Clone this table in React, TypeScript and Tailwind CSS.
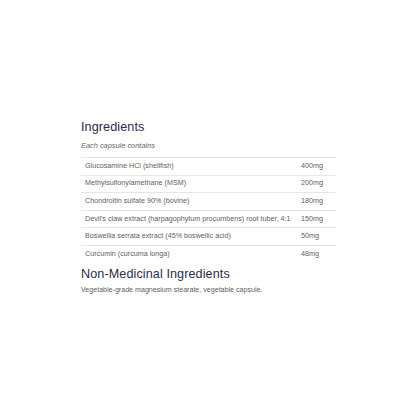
const rows: [string, string][] = [
  ["Glucosamine HCl (shellfish)", "400mg"],
  ["Methylsulfonylamethane (MSM)", "200mg"],
  ["Chondroitin sulfate 90% (bovine)", "180mg"],
  ["Devil's claw extract (harpagophytum procumbens) root tuber, 4:1", "150mg"],
  ["Boswellia serrata extract (45% boswellic acid)", "50mg"],
  ["Curcumin (curcuma longa)", "48mg"],
];

export default function App() {
  return (
    <div
      className="w-[416px] h-[416px] bg-white pt-[117px] pl-[81px] pr-[80px]"
      style={{ fontFamily: '"Liberation Sans", Arial, sans-serif' }}
    >
      <h2 className="text-[12.6px] leading-[20px] text-[#2b2a4c] tracking-[0.1px]">Ingredients</h2>
      <p className="mt-[3px] text-[7.4px] leading-[12px] italic text-[#666]">Each capsule contains</p>
      <table className="mt-[5px] w-full border-collapse text-[7.2px] text-[#606060]">
        <tbody>
          {rows.map(([name, amt], i) => (
            <tr key={i} className="border-t border-[#e6e6e6]">
              <td className="h-[17.6px] pl-[4px] align-middle">{name}</td>
              <td className="h-[17.6px] w-[35px] align-middle">{amt}</td>
            </tr>
          ))}
        </tbody>
      </table>
      <h2 className="mt-[1px] text-[12.6px] leading-[20px] text-[#2b2a4c] tracking-[0.1px]">Non-Medicinal Ingredients</h2>
      <p className="text-[7.1px] leading-[12px] text-[#606060]">
        Vegetable-grade magnesium stearate, vegetable capsule.
      </p>
    </div>
  );
}
